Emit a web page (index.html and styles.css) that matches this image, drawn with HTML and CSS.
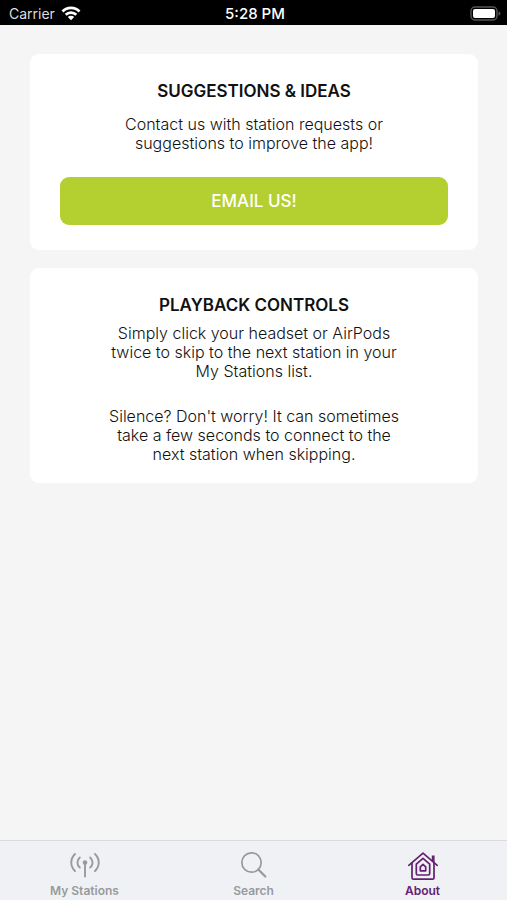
FILE: index.html
```
<!DOCTYPE html>
<html lang="en">
<head>
<meta charset="utf-8">
<meta name="viewport" content="width=device-width, initial-scale=1">
<title>About</title>
<link rel="stylesheet" href="styles.css">
</head>
<body>
<header class="status">
  <div class="status-left">
    <span>Carrier</span>
    <svg class="wifi" viewBox="0 0 20 15" aria-hidden="true">
      <g fill="none" stroke="#fff" stroke-width="2.7">
        <path d="M1.500 5.500a12 12 0 0 1 17 0"/>
        <path d="M4.700 8.800a7.600 7.600 0 0 1 10.600 0"/>
      </g>
      <path d="M6.800 11a4.600 4.600 0 0 1 6.400 0L10 14.300z" fill="#fff"/>
    </svg>
  </div>
  <span class="time">5:28 PM</span>
  <svg class="battery" viewBox="0 0 31 15" aria-hidden="true">
    <rect x="1" y="1" width="26" height="13" rx="4" fill="none" stroke="#555" stroke-width="1.4"/>
    <rect x="3" y="3" width="22" height="9" rx="2" fill="#fff"/>
    <path d="M28.500 5.200q2 .7 2 2.300t-2 2.300z" fill="#555"/>
  </svg>
</header>
<main class="content">
  <section class="card">
    <h2>SUGGESTIONS &amp; IDEAS</h2>
    <p class="intro">Contact us with station requests or<br>suggestions to improve the app!</p>
    <button type="button" class="email">EMAIL US!</button>
  </section>
  <section class="card">
    <h2>PLAYBACK CONTROLS</h2>
    <p class="tip">Simply click your headset or AirPods<br>twice to skip to the next station in your<br>My Stations list.</p>
    <p class="note">Silence? Don't worry! It can sometimes<br>take a few seconds to connect to the<br>next station when skipping.</p>
  </section>
</main>
<nav class="tabs">
  <a href="#stations" class="tab">
    <svg viewBox="0 0 32 32" aria-hidden="true">
      <g fill="none" stroke="currentColor" stroke-width="1.9" stroke-linecap="round">
        <path d="M6 5C1 10 1 17 6 22"/>
        <path d="M10.800 8.500C7.600 11.500 7.600 15.500 10.800 18.500"/>
        <path d="M21.200 8.500C24.400 11.500 24.400 15.500 21.200 18.500"/>
        <path d="M26 5C31 10 31 17 26 22"/>
        <path d="M16 14v13.500"/>
      </g>
      <circle cx="16" cy="13.500" r="2.300" fill="currentColor"/>
    </svg>
    <span>My Stations</span>
  </a>
  <a href="#search" class="tab">
    <svg viewBox="0 0 32 32" aria-hidden="true">
      <circle cx="13.500" cy="13.500" r="9.700" fill="none" stroke="currentColor" stroke-width="1.700"/>
      <path d="M20.300 20.500l7 7" fill="none" stroke="currentColor" stroke-width="2.300" stroke-linecap="round"/>
    </svg>
    <span>Search</span>
  </a>
  <a href="#about" class="tab active" aria-current="page">
    <svg viewBox="0 0 32 32" aria-hidden="true">
      <g fill="none" stroke="currentColor" stroke-width="1.700" stroke-linejoin="round" stroke-linecap="round">
        <path d="M1.800 16.300L16 4.200l14.200 12.100"/>
        <path d="M5 14v14.700q0 1.500 1.500 1.500h19q1.500 0 1.500-1.500V14"/>
        <path d="M16 9.300l-6.700 5.800v9.400q0 1.500 1.500 1.500h10.400q1.500 0 1.500-1.500v-9.400z"/>
        <path d="M16 15.300l-2.700 2.500v4h5.400v-4z"/>
      </g>
      <path d="M24.800 6.500h2.800v7.500l-2.800-2.300z" fill="currentColor"/>
    </svg>
    <span>About</span>
  </a>
</nav>
</body>
</html>
```
FILE: styles.css
```
* {
  box-sizing: border-box;
}

body {
  margin: 0;
  min-height: 100vh;
  display: flex;
  flex-direction: column;
  background: #f5f5f5;
  color: #111;
  font-family: Inter, "Liberation Sans", sans-serif;
}

.status {
  height: 25px;
  padding: 2px 6px 0 9px;
  display: grid;
  grid-template-columns: 1fr auto 1fr;
  align-items: center;
  background: #000;
  color: #fff;
  font-size: 14px;
  line-height: 20px;
}

.status-left {
  display: flex;
  align-items: center;
  gap: 6px;
  color: #ddd;
}

.wifi {
  width: 20px;
  height: 15px;
}

.time {
  font-size: 15px;
  font-weight: 500;
}

.battery {
  width: 31px;
  height: 15px;
  justify-self: end;
}

.content {
  flex: 1;
  padding: 29px 29px 29px 30px;
  display: flex;
  flex-direction: column;
  gap: 18px;
}

.card {
  padding: 25px 30px;
  border-radius: 9px;
  background: #fff;
  text-align: center;
}

h2 {
  margin: 0;
  font-size: 17px;
  line-height: 24px;
  font-weight: 600;
}

p {
  margin: 0;
  font-size: 16px;
  line-height: 19px;
  font-weight: 300;
  white-space: nowrap;
}

.intro {
  margin-top: 12px;
}

.email {
  display: block;
  width: 100%;
  height: 48px;
  margin-top: 24px;
  padding: 0;
  border: 0;
  border-radius: 9px;
  background: #b4d030;
  color: #fff;
  font: inherit;
  font-size: 17px;
  font-weight: 500;
}

.tip {
  margin-top: 7px;
}

.note {
  margin-top: 26px;
  margin-bottom: -6px;
}

.tabs {
  height: 60px;
  display: grid;
  grid-template-columns: repeat(3, 1fr);
  border-top: 1px solid #dadbdd;
  background: #eff1f5;
}

.tab {
  padding-top: 8px;
  display: flex;
  flex-direction: column;
  align-items: center;
  gap: 2px;
  color: #989a9d;
  font-size: 12px;
  line-height: 16px;
  font-weight: 600;
  text-decoration: none;
}

.tab svg {
  width: 32px;
  height: 32px;
}

.active {
  color: #642071;
}
```
